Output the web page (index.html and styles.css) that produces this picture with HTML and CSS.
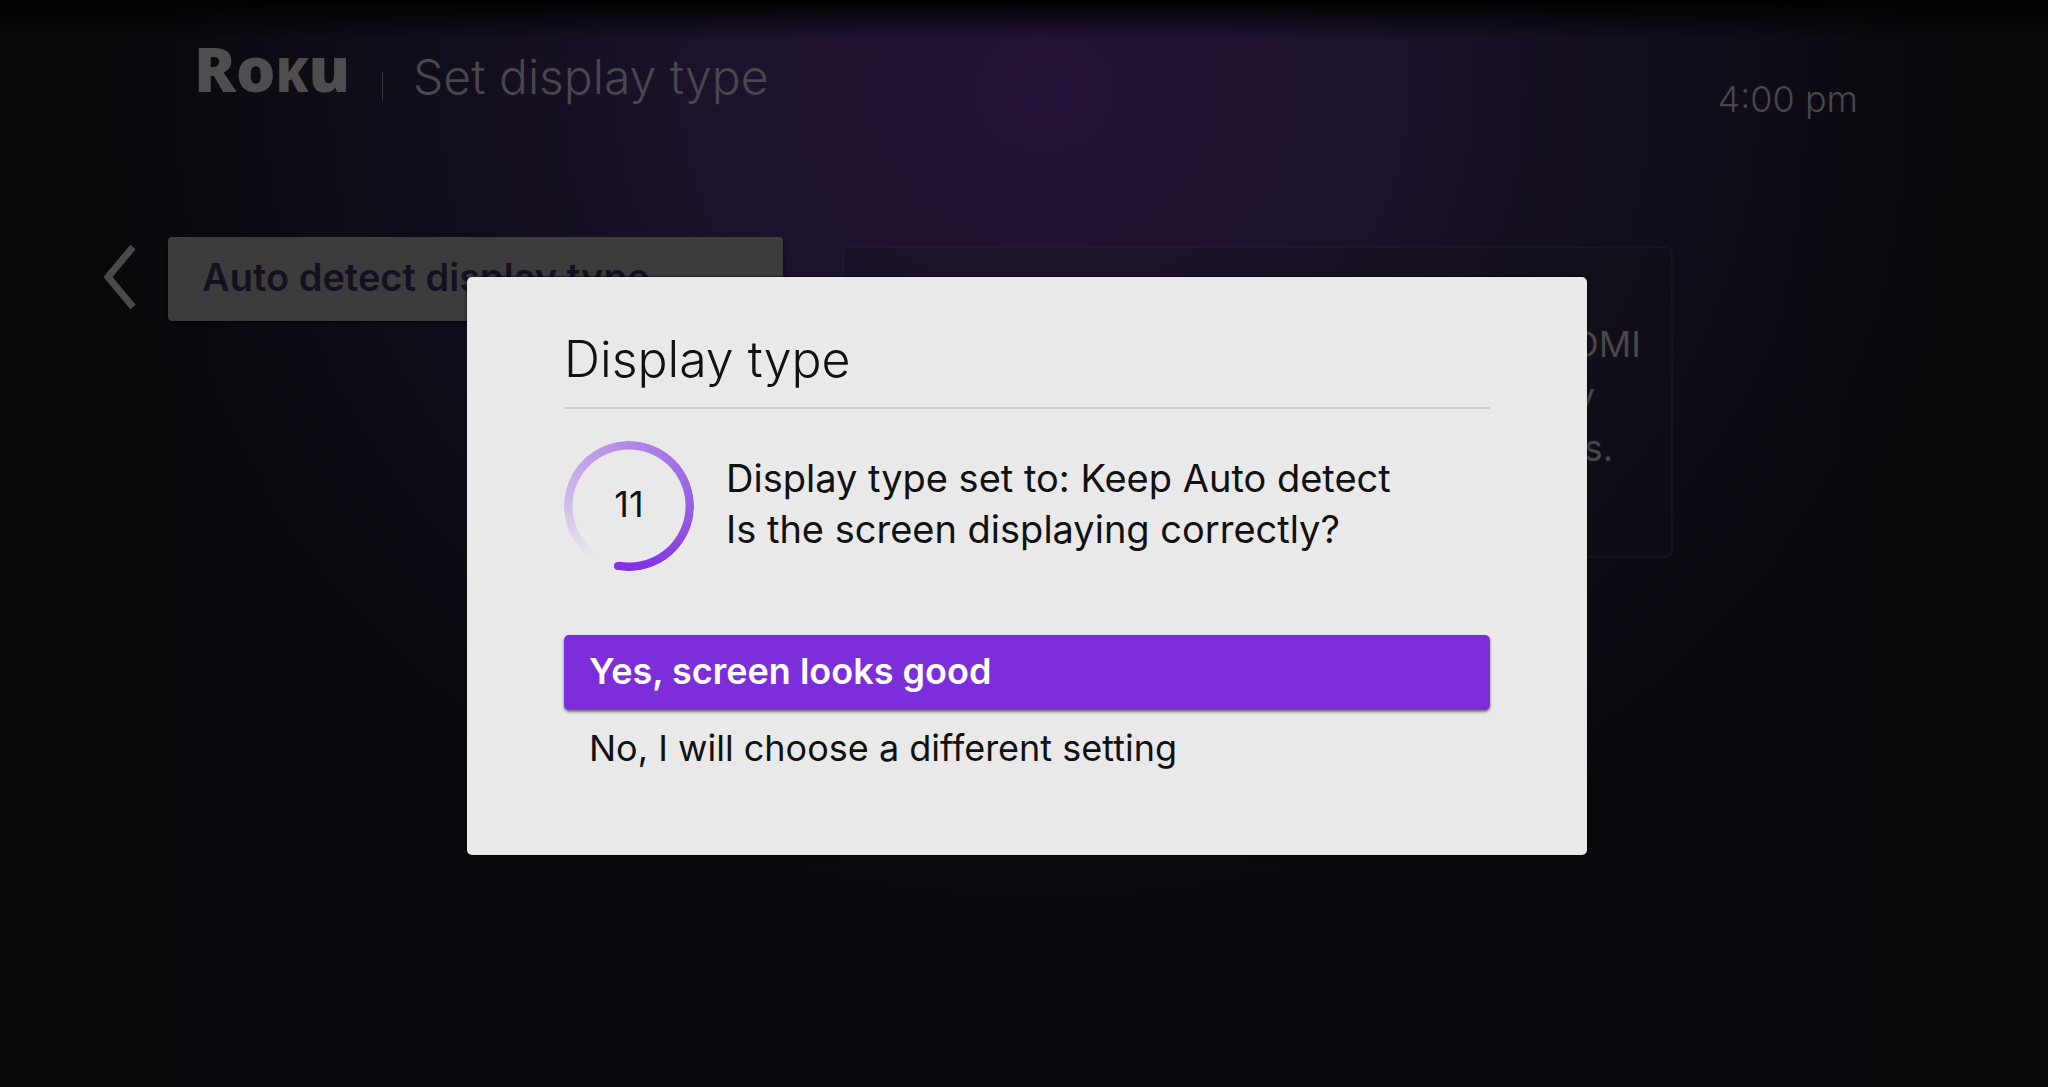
FILE: index.html
```html
<!DOCTYPE html>
<html lang="en">

<head>
    <meta charset="UTF-8">
    <meta name="viewport" content="width=device-width, initial-scale=1.0">
    <title>Set display type</title>
    <link rel="stylesheet" href="styles.css">
</head>

<body>

    <header class="topbar">
        <div class="logo">R<span class="logo-low">o</span><span class="logo-cap">K</span><span class="logo-low">u</span></div>
        <div class="divider"></div>
        <h1 class="page-title">Set display type</h1>
        <time class="clock" datetime="16:00">4:00 pm</time>
    </header>

    <main class="settings">
        <button class="back" aria-label="Back">
            <svg viewBox="0 0 34 64" width="34" height="64">
                <path d="M31 2 6 32l25 30" fill="none" stroke="#4b494d" stroke-width="7" />
            </svg>
        </button>
        <button class="option">Auto detect display type</button>
        <section class="details">
            <p class="line-one">HDMI</p>
            <p class="line-two">y</p>
            <p class="line-three">s.</p>
        </section>
    </main>

    <div class="overlay">
        <div class="dialog" role="dialog" aria-labelledby="dialog-title">
            <h2 class="dialog-title" id="dialog-title">Display type</h2>
            <div class="status">
                <div class="countdown"><span>11</span></div>
                <p class="message">Display type set to: Keep Auto detect<br>Is the screen displaying correctly?</p>
            </div>
            <div class="choices">
                <button class="choice selected">Yes, screen looks good</button>
                <button class="choice">No, I will choose a different setting</button>
            </div>
        </div>
    </div>

</body>

</html>
```

FILE: styles.css
```css
* {
    box-sizing: border-box;
}

body {
    margin: 0;
    min-height: 100vh;
    font-family: Inter, "Open Sans", sans-serif;
    color: #49464c;
    background:
        linear-gradient(#000 0, rgba(0, 0, 0, 0) 40px),
        linear-gradient(90deg, rgba(8, 8, 8, 0.6) 0, rgba(8, 8, 8, 0) 14%, rgba(8, 8, 8, 0) 86%, rgba(8, 8, 8, 0.6) 100%),
        radial-gradient(ellipse 950px 850px at 51% 90px, #251439 0, #1e132f 30%, #130e1e 60%, #0a080d 100%);
}

h1,
h2,
p {
    margin: 0;
    font-weight: 400;
}

button {
    border: none;
    font: inherit;
    color: inherit;
    background: none;
    text-align: left;
    cursor: pointer;
}

.topbar {
    display: flex;
    align-items: flex-start;
    height: 237px;
    padding: 40px 190px 0 194px;
}

.logo {
    font-family: "Open Sans", sans-serif;
    font-size: 62px;
    font-weight: 800;
    line-height: 56px;
    color: #4e4d4f;
    white-space: nowrap;
}

.logo-low {
    font-size: 62px;
}

.logo-cap {
    font-size: 48px;
}

.divider {
    width: 1px;
    height: 28px;
    margin: 32px 30px 0 32px;
    background: #39353d;
}

.page-title {
    font-size: 48px;
    font-weight: 300;
    line-height: 74px;
}

.clock {
    margin-left: auto;
    margin-top: 34px;
    font-size: 36px;
    font-weight: 300;
    line-height: 50px;
}

.settings {
    display: flex;
    align-items: flex-start;
    padding: 0 375px 0 102px;
}

.back {
    display: flex;
    margin: 8px 32px 0 0;
    padding: 0;
}

.option {
    width: 615px;
    height: 84px;
    padding: 0 34px 4px;
    border-radius: 4px;
    font-size: 38px;
    font-weight: 600;
    color: #15101f;
    background: #3c3c3c;
    box-shadow: 0 2px 4px rgba(0, 0, 0, 0.6);
}

.details {
    flex: 1;
    height: 312px;
    margin: 9px 0 0 59px;
    padding-top: 70px;
    border: 2px solid rgba(255, 255, 255, 0.03);
    border-radius: 8px;
    background: rgba(20, 18, 22, 0.3);
    font-size: 36px;
    line-height: 52px;
    text-align: right;
}

.line-one {
    padding-right: 30px;
}

.line-two {
    padding-right: 76px;
}

.line-three {
    padding-right: 58px;
}

.overlay {
    position: absolute;
    top: 277px;
    left: 6px;
    right: 0;
    display: flex;
    justify-content: center;
}

.dialog {
    width: 1120px;
    padding: 50px 97px 68px;
    border-radius: 5px;
    color: #111;
    background: #e9e9e9;
    box-shadow: 0 0 3px #000;
}

.dialog-title {
    padding-bottom: 16px;
    border-bottom: 2px solid #cdcdcd;
    font-size: 50px;
    font-weight: 300;
    line-height: 64px;
}

.status {
    display: flex;
    align-items: center;
    margin-top: 32px;
}

.countdown {
    position: relative;
    display: flex;
    align-items: center;
    justify-content: center;
    width: 130px;
    height: 130px;
    margin-right: 32px;
    padding-bottom: 4px;
    font-size: 36px;
}

/* fading ring */
.countdown::before {
    content: "";
    position: absolute;
    inset: 0;
    border-radius: 50%;
    background: conic-gradient(from 190deg, rgba(125, 46, 219, 0) 0, rgba(125, 46, 219, 0) 6%, #dcd2ea 16%, #cbb5e9 26%, #b388e6 47%, #9a62e3 70%, #8436e2 92%, #8233e1 100%);
    -webkit-mask: radial-gradient(closest-side, transparent 56px, #000 57px);
    mask: radial-gradient(closest-side, transparent 56px, #000 57px);
}

/* round end of the ring */
.countdown::after {
    content: "";
    position: absolute;
    left: 50px;
    bottom: 1px;
    width: 8px;
    height: 8px;
    border-radius: 50%;
    background: #8233e1;
}

.message {
    padding-bottom: 4px;
    font-size: 38px;
    line-height: 51px;
}

.choices {
    display: flex;
    flex-direction: column;
    gap: 2px;
    margin-top: 64px;
}

.choice {
    height: 75px;
    padding: 0 25px 4px;
    border-radius: 5px;
    font-size: 36px;
}

.selected {
    font-weight: 600;
    color: #fff;
    background: #7d2edb;
    box-shadow: 0 2px 3px rgba(0, 0, 0, 0.5);
}
```
